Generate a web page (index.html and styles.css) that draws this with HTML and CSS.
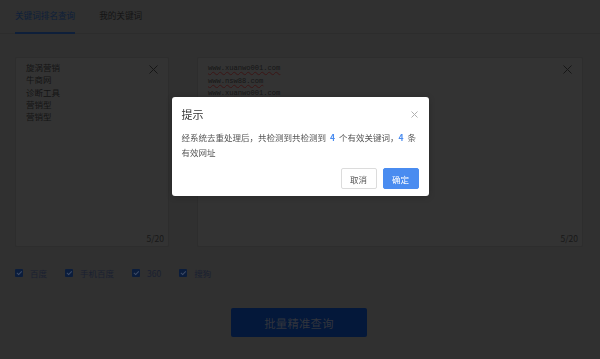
FILE: index.html
```html
<!DOCTYPE html>
<html lang="zh-CN">
<head>
    <meta charset="UTF-8">
    <meta name="viewport" content="width=device-width, initial-scale=1.0">
    <title>关键词排名查询</title>
    <link rel="stylesheet" href="styles.css">
</head>
<body>
    <div class="tabs">
        <a href="#" class="tab active">关键词排名查询</a>
        <a href="#" class="tab">我的关键词</a>
    </div>

    <div class="editors">
        <div class="editor editor-words">
            <div class="editor-text">
                <div>旋涡营销</div>
                <div>牛商网</div>
                <div>诊断工具</div>
                <div>营销型</div>
                <div>营销型</div>
            </div>
            <span class="editor-clear">
                <svg width="9" height="9" viewBox="0 0 9 9"><path d="M0.5 0.5L8.5 8.5M8.5 0.5L0.5 8.5" stroke="currentColor" stroke-width="1"/></svg>
            </span>
            <span class="editor-count">5/20</span>
        </div>
        <div class="editor editor-urls">
            <div class="editor-text">
                <div><span class="typo">www.xuanwo001.com</span></div>
                <div><span class="typo">www.nsw88.com</span></div>
                <div><span class="typo">www.xuanwo001.com</span></div>
            </div>
            <span class="editor-clear">
                <svg width="9" height="9" viewBox="0 0 9 9"><path d="M0.5 0.5L8.5 8.5M8.5 0.5L0.5 8.5" stroke="currentColor" stroke-width="1"/></svg>
            </span>
            <span class="editor-count">5/20</span>
        </div>
    </div>

    <div class="engines">
        <label class="engine"><span class="check"></span>百度</label>
        <label class="engine"><span class="check"></span>手机百度</label>
        <label class="engine"><span class="check"></span>360</label>
        <label class="engine"><span class="check"></span>搜狗</label>
    </div>

    <button class="btn-query">批量精准查询</button>

    <div class="mask">
        <div class="dialog">
            <div class="dialog-head">
                <span class="dialog-title">提示</span>
                <span class="dialog-close">
                    <svg width="7" height="7" viewBox="0 0 7 7"><path d="M0.5 0.5L6.5 6.5M6.5 0.5L0.5 6.5" stroke="currentColor" stroke-width="1"/></svg>
                </span>
            </div>
            <div class="dialog-body">
                <div><span>经系统去重处理后，共检测到共检测到</span><b>4</b><span>个有效关键词，</span><b class="tight">4</b><span>条</span></div>
                <div>有效网址</div>
            </div>
            <div class="dialog-foot">
                <button class="btn btn-cancel">取消</button>
                <button class="btn btn-ok">确定</button>
            </div>
        </div>
    </div>
</body>
</html>
```

FILE: styles.css
```css
:root {
    --page-bg: #303030;
    --box-bg: #333333;
    --dim-text: #141414;
    --dim-blue: #0b1d3c;
    --primary: #4a8cf0;
}

body {
    margin: 0;
    background-color: var(--page-bg);
    font-family: "Noto Sans CJK SC", "Noto Sans", sans-serif;
    font-size: 8.5px;
    color: var(--dim-text);
    height: 359px;
    overflow: hidden;
}

.tabs {
    display: flex;
    gap: 24px;
    padding: 0 15px;
    height: 33px;
    border-bottom: 1px solid #2c2c2c;
}

.tab {
    text-decoration: none;
    color: var(--dim-text);
    font-size: 8.6px;
    line-height: 14px;
    padding-top: 8px;
    box-sizing: border-box;
    height: 34px;
}

.tab.active {
    color: #0e1f3a;
    border-bottom: 2px solid #0e1f3a;
}

.editors {
    display: flex;
    gap: 28px;
    padding: 0 15px;
    margin-top: 23px;
}

.editor {
    position: relative;
    height: 190px;
    box-sizing: border-box;
    background-color: var(--box-bg);
    border: 1px solid #2d2d2d;
    border-radius: 2px;
    padding: 3px 10px;
}

.editor-words {
    width: 154px;
}

.editor-urls {
    width: 386px;
}

.editor-text {
    line-height: 12.3px;
}

.editor-urls .editor-text {
    font-family: "Liberation Mono", monospace;
    font-size: 7.1px;
    line-height: 12.5px;
    padding-top: 1px;
    color: #161616;
}

.typo {
    text-decoration: underline wavy #3a1515;
    text-decoration-thickness: 1px;
    text-underline-offset: 1px;
}

.editor-clear {
    position: absolute;
    top: 7px;
    right: 10px;
    color: #161616;
    line-height: 0;
}

.editor-count {
    position: absolute;
    right: 4px;
    bottom: 2px;
    font-size: 8.5px;
    color: #181818;
}

.engines {
    display: flex;
    gap: 18px;
    padding: 0 15px;
    margin-top: 20px;
    line-height: 12px;
}

.engine {
    display: flex;
    align-items: center;
    gap: 7px;
    color: #1a2030;
}

.check {
    width: 8px;
    height: 8px;
    border-radius: 1px;
    background-color: var(--dim-blue);
    position: relative;
}

.check::after {
    content: "";
    position: absolute;
    left: 2.6px;
    top: 1.2px;
    width: 2px;
    height: 3.6px;
    border: solid #3d4b66;
    border-width: 0 1px 1px 0;
    transform: rotate(45deg);
}

.btn-query {
    display: block;
    margin: 29px 0 0 231px;
    width: 136px;
    height: 29px;
    border: 0;
    border-radius: 2px;
    background-color: #04183a;
    color: #32353d;
    font-family: inherit;
    font-size: 11.3px;
    letter-spacing: 0.3px;
}

.mask {
    position: fixed;
    inset: 0;
    display: flex;
    justify-content: center;
    align-items: flex-start;
    padding-top: 97px;
}

.dialog {
    width: 257px;
    height: 99px;
    box-sizing: border-box;
    background-color: #fff;
    border-radius: 3px;
    box-shadow: 0 1px 6px rgba(0, 0, 0, 0.2);
    display: flex;
    flex-direction: column;
}

.dialog-head {
    display: flex;
    justify-content: space-between;
    align-items: center;
    padding: 9px 11px 0 10px;
    height: 16px;
}

.dialog-title {
    font-size: 11px;
    color: #333;
}

.dialog-close {
    color: #b0b0b0;
    line-height: 0;
}

.dialog-body {
    padding: 8px 10px 0 10px;
    font-size: 8.5px;
    line-height: 14.5px;
    color: #555;
    white-space: nowrap;
}

.dialog-body b {
    color: var(--primary);
    font-weight: 600;
    margin: 0 4px;
}

.dialog-body b.tight {
    margin-left: 0;
}

.dialog-foot {
    display: flex;
    justify-content: flex-end;
    gap: 6px;
    padding: 0 10px;
    margin-top: auto;
    margin-bottom: 7px;
}

.btn {
    width: 36px;
    height: 21px;
    border-radius: 2px;
    font-family: inherit;
    font-size: 8.5px;
    padding: 0;
}

.btn-cancel {
    background-color: #fff;
    border: 1px solid #dcdcdc;
    color: #555;
}

.btn-ok {
    background-color: var(--primary);
    border: 1px solid var(--primary);
    color: #fff;
}
```
